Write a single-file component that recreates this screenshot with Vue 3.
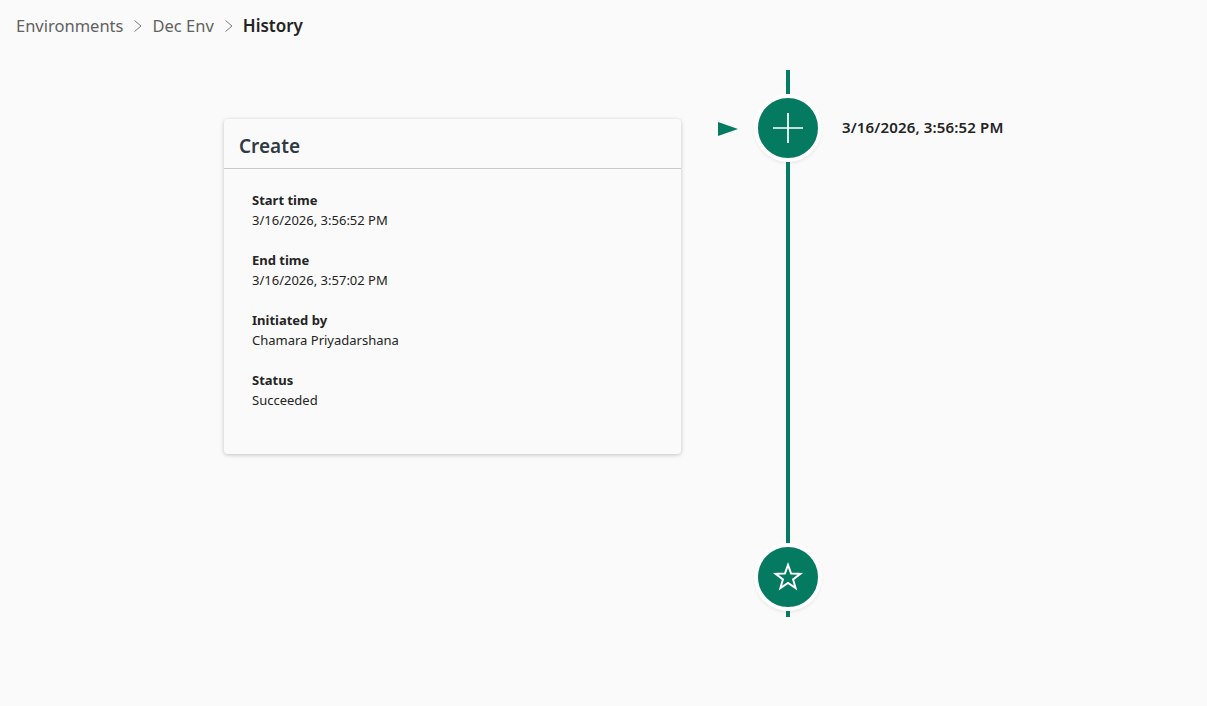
<script setup>
const fields = [
  { label: 'Start time', value: '3/16/2026, 3:56:52 PM' },
  { label: 'End time', value: '3/16/2026, 3:57:02 PM' },
  { label: 'Initiated by', value: 'Chamara Priyadarshana' },
  { label: 'Status', value: 'Succeeded' }
]
</script>

<template>
  <div class="page">
    <nav class="crumbs">
      <span class="crumb">Environments</span>
      <svg class="chev" viewBox="0 0 10 14"><path d="M1.5 1.5L8 7L1.5 12.5" /></svg>
      <span class="crumb">Dec Env</span>
      <svg class="chev" viewBox="0 0 10 14"><path d="M1.5 1.5L8 7L1.5 12.5" /></svg>
      <span class="crumb current">History</span>
    </nav>

    <main class="content">
      <section class="card">
        <h2 class="cardTitle">Create</h2>
        <div class="cardBody">
          <div class="field" v-for="f in fields" :key="f.label">
            <div class="fieldLabel">{{ f.label }}</div>
            <div class="fieldValue">{{ f.value }}</div>
          </div>
        </div>
      </section>

      <svg class="pointer" viewBox="0 0 20 14"><path d="M0 0L20 7L0 14Z" /></svg>

      <div class="timeline">
        <div class="line top"></div>
        <div class="node">
          <svg viewBox="0 0 32 32"><path d="M16 1V31M1 16H31" /></svg>
        </div>
        <div class="line long"></div>
        <div class="node">
          <svg class="star" viewBox="0 0 32 32"><path d="M16 3.9L19.1 12.5L28.3 12.8L21.1 18.4L23.6 27.2L16 22L8.4 27.2L10.9 18.4L3.7 12.8L12.9 12.5Z" /></svg>
        </div>
        <div class="line bottom"></div>
      </div>

      <div class="stamp">3/16/2026, 3:56:52 PM</div>
    </main>
  </div>
</template>

<style>
html, body {
  background: #fafafa;
}
</style>

<style scoped>
.page {
  height: 706px;
  background: #fafafa;
  font-family: "Noto Sans", "Open Sans", sans-serif;
  color: #242424;
  overflow: hidden;
}

.crumbs {
  display: flex;
  align-items: baseline;
  height: 24px;
  padding: 14px 0 0 16px;
  font-size: 16.5px;
  color: #616161;
}

.current {
  font-size: 17px;
  font-weight: 600;
  color: #242424;
}

.chev {
  align-self: center;
  width: 10px;
  height: 14px;
  margin: 0 9px 0 10px;
  fill: none;
  stroke: #7a7a7a;
  stroke-width: 1;
}

.content {
  display: flex;
  align-items: flex-start;
  padding: 32px 0 0 224px;
}

.card {
  width: 457px;
  height: 335px;
  margin-top: 49px;
  border-radius: 4px;
  background: #fafafa;
  box-shadow: 0 1px 4px rgba(0, 0, 0, 0.22);
}

.cardTitle {
  margin: 0;
  height: 50px;
  box-sizing: border-box;
  padding: 14px 0 0 15px;
  border-bottom: 1px solid #c8c8c8;
  font-size: 19px;
  line-height: 27px;
  font-weight: 600;
  color: #2f3a44;
}

.cardBody {
  padding: 21px 0 0 28px;
}

.field {
  height: 60px;
  font-size: 13px;
  line-height: 20px;
}

.fieldLabel {
  font-weight: 700;
  color: #242424;
}

.fieldValue {
  color: #242424;
}

.pointer {
  width: 20px;
  height: 14px;
  margin: 52px 16px 0 37px;
  fill: #047a60;
}

.timeline {
  display: flex;
  flex-direction: column;
  align-items: center;
  width: 68px;
}

.line {
  width: 4px;
  background: #047a60;
}

.top {
  height: 24px;
}

.long {
  height: 381px;
}

.bottom {
  height: 6px;
}

.node {
  display: flex;
  align-items: center;
  justify-content: center;
  box-sizing: border-box;
  width: 68px;
  height: 68px;
  border: 4px solid #fff;
  border-radius: 50%;
  background: #047a60;
  box-shadow: 0 2px 3px rgba(0, 0, 0, 0.06);
}

.node svg {
  width: 32px;
  height: 32px;
  fill: none;
  stroke: #fff;
  stroke-width: 1.7;
}

.node .star {
  stroke-width: 2;
}

.stamp {
  margin: 47px 0 0 20px;
  font-size: 15px;
  line-height: 20px;
  font-weight: 600;
  color: #242424;
  letter-spacing: 0.15px;
  white-space: nowrap;
}
</style>
